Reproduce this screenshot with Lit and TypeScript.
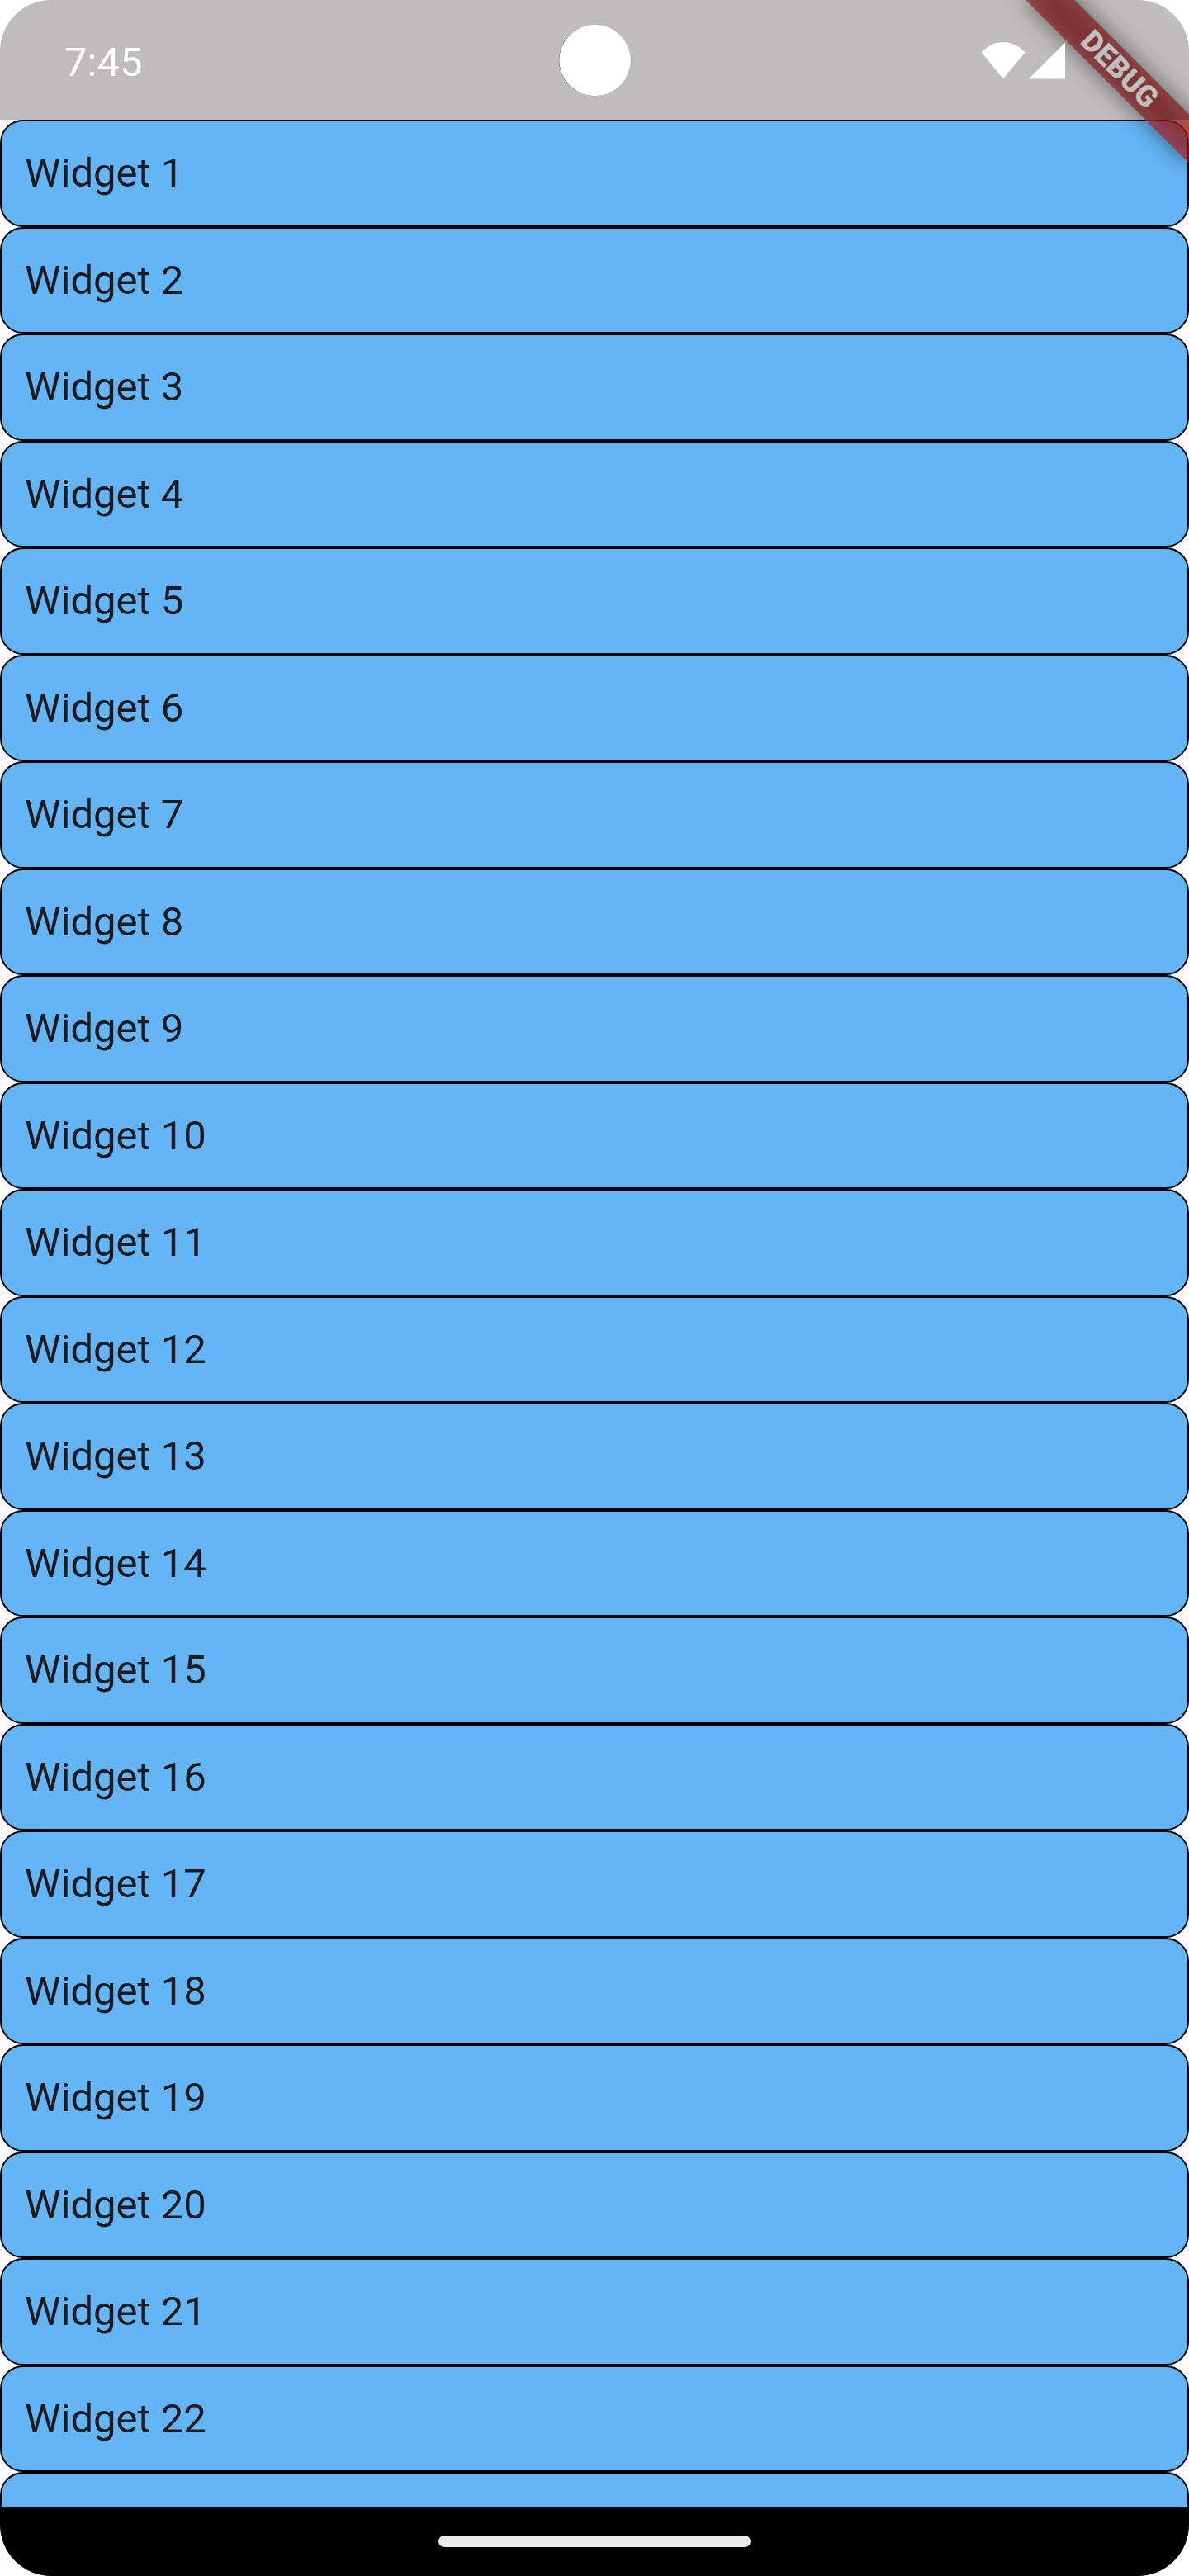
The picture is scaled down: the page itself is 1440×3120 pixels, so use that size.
import { LitElement, html, css } from "lit";
import { customElement, property } from "lit/decorators.js";

@customElement("status-bar")
class StatusBar extends LitElement {
  @property() time = "";

  static styles = css`
    :host {
      position: relative;
      z-index: 2;
      flex: none;
      display: grid;
      grid-template-columns: 1fr auto 1fr;
      align-items: center;
      height: 145px;
      background: rgba(0, 0, 0, 0.25);
      color: #fff;
    }
    .time {
      padding-left: 78px;
      padding-top: 6px;
      font-size: 49px;
      line-height: 56px;
    }
    .camera {
      display: block;
      width: 88px;
      height: 88px;
    }
    .icons {
      display: flex;
      justify-content: flex-end;
      gap: 4px;
      padding-right: 150px;
    }
    .wifi {
      width: 54px;
      height: 46px;
    }
    .signal {
      width: 44px;
      height: 46px;
    }
  `;

  render() {
    return html`
      <time class="time">${this.time}</time>
      <svg class="camera" viewBox="0 0 88 88" aria-hidden="true">
        <circle cx="44" cy="44" r="43" fill="#333" />
        <circle cx="44.5" cy="44" r="43.2" fill="#fff" />
      </svg>
      <div class="icons">
        <svg class="wifi" viewBox="0 0 54 46" aria-label="Wi-Fi" role="img">
          <path d="M27 45.5 0.5 13.5C8 5.5 17 1 27 1S46 5.5 53.5 13.5Z" fill="#fff" />
        </svg>
        <svg class="signal" viewBox="0 0 44 46" aria-label="Signal" role="img">
          <path d="M0 45.5H44V1.5Z" fill="#fff" />
        </svg>
      </div>
    `;
  }
}

@customElement("debug-banner")
class DebugBanner extends LitElement {
  static styles = css`
    :host {
      position: absolute;
      z-index: 1;
      top: 63px;
      right: -56px;
      width: 280px;
      height: 42px;
      transform: rotate(45deg);
      pointer-events: none;
    }
    .shadow {
      position: absolute;
      inset: 0;
      background: rgba(0, 0, 0, 0.5);
      filter: blur(14px);
    }
    .label {
      position: relative;
      display: block;
      background: rgba(183, 28, 28, 0.627);
      color: #fff;
      font-size: 36px;
      font-weight: 900;
      line-height: 42px;
      text-align: center;
    }
  `;

  render() {
    return html`<div class="shadow"></div><span class="label">DEBUG</span>`;
  }
}

@customElement("app-root")
export class AppRoot extends LitElement {
  private items = Array.from({ length: 22 }, (_, i) => `Widget ${i + 1}`);

  static styles = css`
    :host {
      display: block;
      background: #fff;
      font-family: Roboto, "Liberation Sans", sans-serif;
    }
    .screen {
      position: relative;
      display: flex;
      flex-direction: column;
      height: 100vh;
      overflow: hidden;
      border-radius: 62px;
      background: #fffbfe;
      color: #1d1b20;
    }
    .content {
      flex: 1;
      min-height: 0;
      overflow-y: auto;
      scrollbar-width: none;
    }
    .list {
      display: grid;
      grid-auto-rows: 130px 129px;
      margin: 0;
      padding: 0;
      list-style: none;
    }
    .item {
      display: flex;
      align-items: center;
      box-sizing: border-box;
      padding: 0 28px;
      border: 2px solid #000;
      border-radius: 28px;
      background: #64b5f6;
      font-size: 49px;
      line-height: 70px;
    }
    .navigation {
      flex: none;
      display: flex;
      align-items: center;
      justify-content: center;
      height: 84px;
      background: #000;
    }
    .handle {
      width: 378px;
      height: 14px;
      border-radius: 7px;
      background: #ebebeb;
    }
  `;

  render() {
    return html`
      <div class="screen">
        <status-bar time="7:45"></status-bar>
        <main class="content">
          <ul class="list">
            ${this.items.map((item) => html`<li class="item">${item}</li>`)}
            <li class="item" aria-hidden="true"></li>
          </ul>
        </main>
        <debug-banner></debug-banner>
        <div class="navigation"><div class="handle"></div></div>
      </div>
    `;
  }
}
